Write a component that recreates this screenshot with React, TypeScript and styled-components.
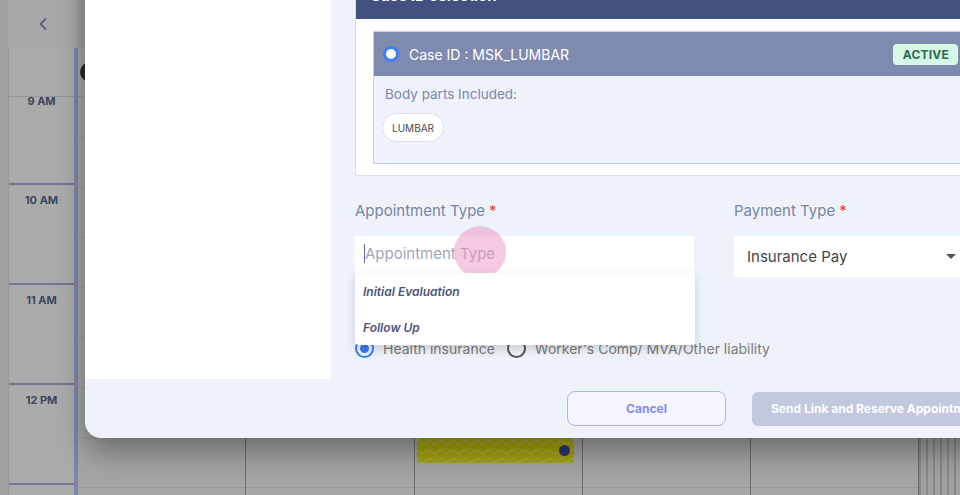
import React from 'react'
import styled, { createGlobalStyle } from 'styled-components'
import { ChevronLeft } from 'lucide-react'

const GlobalStyle = createGlobalStyle`
    html, body {
        margin: 0;
        padding: 0;
        width: 960px;
        height: 495px;
        overflow: hidden;
    }
    body {
        font-family: Inter, 'Open Sans', sans-serif;
        background: #f0f0f0;
    }
    * {
        box-sizing: border-box;
    }
`

const Page = styled.div`
    position: relative;
    width: 960px;
    height: 495px;
    overflow: hidden;
`

/* calendar behind the modal */

const Calendar = styled.div`
    display: flex;
    flex-direction: column;
    padding-left: 8px;
    height: 100%;
`

const CalHeader = styled.div`
    display: flex;
    height: 48px;
    flex: 0 0 48px;
    background: #ececec;
`

const NavCell = styled.div`
    width: 69px;
    display: flex;
    align-items: center;
    justify-content: center;
    background: #fcfdff;
    color: #8090bb;
`

const CalBody = styled.div`
    display: flex;
    flex: 1;
`

const TimeColumn = styled.div`
    width: 70px;
    display: flex;
    flex-direction: column;
    background: #ffffff;
    border-left: 1px solid #e2e2e2;
    border-right: 4px solid #bdc7fa;
`

const AllDayCell = styled.div`
    height: 49px;
    flex: 0 0 49px;
    border-bottom: 1px solid #e2e2e2;
    position: relative;
`

const HourCell = styled.div<{ $height: number; $first?: boolean }>`
    flex: 0 0 ${(p) => p.$height}px;
    border-top: ${(p) => (p.$first ? 'none' : '2px solid #a6afdc')};
    display: flex;
    justify-content: center;
    overflow: hidden;
`

const HourLabel = styled.span<{ $shift?: number }>`
    font-size: 11px;
    font-weight: 700;
    color: #5e6890;
    margin-top: ${(p) => p.$shift ?? 8}px;
    line-height: 14px;
`

const DayColumn = styled.div<{ $width: number }>`
    position: relative;
    flex: 0 0 ${(p) => p.$width}px;
    display: flex;
    flex-direction: column;
    border-right: 1px solid #a2a2a2;
    background: #f7f7f7;
`

const Slots = styled.div`
    flex: 1;
    position: relative;
    background-image: linear-gradient(to bottom, #e4e4e4 1px, transparent 1px);
    background-size: 100% 50px;
    background-position: 0 40px;
`

const Striped = styled.div`
    flex: 1;
    background: repeating-linear-gradient(to right, #cdcdcd 0 2px, #f1f1f1 2px 7px);
`

const Avatar = styled.div`
    position: absolute;
    left: 2px;
    top: 14px;
    width: 20px;
    height: 20px;
    border-radius: 50%;
    background: #3f3a48;
`

const Event = styled.div`
    position: absolute;
    left: 2px;
    right: 8px;
    top: 341px;
    height: 25px;
    border-radius: 4px;
    overflow: hidden;
    background: #f8f500;
`

const EventDot = styled.span`
    position: absolute;
    right: 4px;
    top: 7px;
    width: 11px;
    height: 11px;
    border-radius: 50%;
    background: #4350a8;
`

const Overlay = styled.div`
    position: absolute;
    inset: 0;
    background: rgba(0, 0, 0, 0.33);
`

/* modal */

const Modal = styled.div`
    position: absolute;
    left: 85px;
    top: -49px;
    width: 927px;
    height: 487px;
    display: flex;
    flex-direction: column;
    background: #eef3fb;
    border-radius: 16px;
    box-shadow: 0 14px 30px rgba(0, 0, 0, 0.35);
    overflow: hidden;
`

const ModalBody = styled.div`
    flex: 1;
    display: flex;
    min-height: 0;
`

const Sidebar = styled.div`
    width: 246px;
    background: #ffffff;
`

const Content = styled.div`
    flex: 1;
    padding: 24px 24px 0;
    display: flex;
    flex-direction: column;
`

const CaseCard = styled.div`
    border: 1px solid #dcdfe7;
    border-top: none;
    background: #ffffff;
`

const CaseHeader = styled.div`
    height: 44px;
    display: flex;
    align-items: center;
    padding: 0 14px 3px;
    background: #42517f;
    color: #ffffff;
    font-weight: 700;
    font-size: 15px;
`

const CaseCardBody = styled.div`
    padding: 12px 17px 11px;
`

const CaseBox = styled.div`
    border: 1px solid #c8cdf3;
    background: #eef3fb;
`

const CaseRow = styled.div`
    height: 44px;
    display: flex;
    align-items: center;
    padding: 0 11px 0 9px;
    background: #7f8bae;
    color: #ffffff;
    font-size: 14px;
`

const CaseRadio = styled.span`
    width: 16px;
    height: 16px;
    border-radius: 50%;
    border: 3px solid #3c7ef6;
    background: #ffffff;
    margin-right: 10px;
`

const ActiveBadge = styled.span`
    margin-left: auto;
    height: 21px;
    padding: 0 9px 0 10px;
    display: flex;
    align-items: center;
    border-radius: 4px;
    background: #d6f7e6;
    color: #2d6a4e;
    font-size: 12px;
    font-weight: 700;
    letter-spacing: 0.2px;
`

const CaseBoxBody = styled.div`
    padding: 8px 8px 21px;
`

const PartsLabel = styled.div`
    font-size: 13.5px;
    line-height: 20px;
    color: #7d86a6;
    padding-left: 3px;
`

const Chip = styled.span`
    display: inline-flex;
    align-items: center;
    margin-top: 9px;
    height: 29px;
    padding: 0 9px;
    border-radius: 15px;
    background: #ffffff;
    border: 1px solid #dddfe5;
    font-size: 10px;
    color: #4a4a4a;
`

const FormGrid = styled.div`
    display: grid;
    grid-template-columns: 339px 231px;
    column-gap: 40px;
    margin-top: 25px;
`

const Field = styled.div`
    display: flex;
    flex-direction: column;
    gap: 15px;
`

const Label = styled.div<{ $top?: number }>`
    font-size: 15px;
    line-height: 20px;
    color: #7a83a3;
    margin-top: ${(p) => p.$top ?? 0}px;
`

const Required = styled.span`
    color: #e53935;
    margin-left: 4px;
`

const InputBox = styled.div`
    position: relative;
    height: 41px;
    background: #ffffff;
    display: flex;
    align-items: flex-start;
    padding: 8px 9px 0;
    font-size: 15px;
    color: #a2a7b8;
`

const Caret = styled.span`
    width: 1px;
    height: 19px;
    background: #5068b5;
`

const Ripple = styled.span`
    position: absolute;
    left: 99px;
    top: -10px;
    width: 52px;
    height: 52px;
    border-radius: 50%;
    background: rgba(236, 150, 195, 0.5);
    z-index: 2;
`

const Menu = styled.ul`
    position: absolute;
    left: 0;
    top: 37px;
    width: 340px;
    margin: 0;
    padding: 0;
    list-style: none;
    background: #ffffff;
    border-radius: 0 0 4px 4px;
    box-shadow: 0 4px 10px rgba(0, 0, 0, 0.16);
    z-index: 3;
`

const MenuItem = styled.li`
    height: 36px;
    display: flex;
    align-items: center;
    padding-left: 8px;
    font-size: 12px;
    font-style: italic;
    font-weight: 600;
    color: #4b5479;
`

const SelectBox = styled.div`
    height: 41px;
    background: #ffffff;
    display: flex;
    align-items: center;
    justify-content: space-between;
    padding: 0 9px 0 13px;
    font-size: 15px;
    color: #454545;
`

const SelectArrow = styled.span`
    width: 0;
    height: 0;
    border-left: 5px solid transparent;
    border-right: 5px solid transparent;
    border-top: 5px solid #555555;
`

const RadioRow = styled.div`
    display: flex;
    align-items: center;
    margin-top: 16px;
    height: 18px;
`

const RadioOption = styled.label`
    display: flex;
    align-items: center;
    gap: 9px;
    margin-right: 12px;
    font-size: 14px;
    color: #7a7a7a;
`

const RadioCircle = styled.span<{ $checked?: boolean }>`
    width: 19px;
    height: 19px;
    border-radius: 50%;
    border: 2px solid ${(p) => (p.$checked ? '#3d7cf2' : '#555555')};
    display: flex;
    align-items: center;
    justify-content: center;

    &::after {
        content: '';
        width: 9px;
        height: 9px;
        border-radius: 50%;
        background: ${(p) => (p.$checked ? '#3d7cf2' : 'transparent')};
    }
`

const Footer = styled.div`
    flex: 0 0 59px;
    display: flex;
    align-items: center;
    justify-content: flex-end;
    gap: 26px;
    padding-right: 24px;
`

const CancelButton = styled.button`
    width: 159px;
    height: 35px;
    border: 1.5px solid #a9b4f8;
    border-radius: 8px;
    background: #f7f5ff;
    color: #7b8af5;
    font-family: inherit;
    font-size: 12px;
    font-weight: 700;
`

const SendButton = styled.button`
    width: 236px;
    height: 34px;
    border: none;
    border-radius: 6px;
    background: #c1c8e0;
    color: #ffffff;
    font-family: inherit;
    font-size: 12px;
    font-weight: 700;
    text-align: left;
    padding: 0 0 0 19px;
    white-space: nowrap;
    overflow: hidden;
`

const hours = [
    { label: '9 AM', height: 86, shift: -3, first: true },
    { label: '10 AM', height: 100 },
    { label: '11 AM', height: 100 },
    { label: '12 PM', height: 100 },
    { label: '1 PM', height: 100 },
]

const dayWidths = [168, 169, 168, 168, 168]

const Zigzag = () => (
    <svg width="100%" height="100%">
        <defs>
            <pattern id="zz" width="12" height="9" patternUnits="userSpaceOnUse">
                <path d="M0 2 L6 7 L12 2" fill="none" stroke="#fdfb9c" strokeWidth="1.2" />
            </pattern>
        </defs>
        <rect width="100%" height="100%" fill="url(#zz)" />
    </svg>
)

const App = () => {
    return (
        <Page>
            <GlobalStyle />
            <Calendar>
                <CalHeader>
                    <NavCell>
                        <ChevronLeft size={20} strokeWidth={2.2} />
                    </NavCell>
                </CalHeader>
                <CalBody>
                    <TimeColumn>
                        <AllDayCell />
                        {hours.map((h) => (
                            <HourCell key={h.label} $height={h.height} $first={h.first}>
                                <HourLabel $shift={h.shift}>{h.label}</HourLabel>
                            </HourCell>
                        ))}
                    </TimeColumn>
                    {dayWidths.map((w, i) => (
                        <DayColumn key={i} $width={w}>
                            <AllDayCell>{i === 0 && <Avatar />}</AllDayCell>
                            <Slots>
                                {i === 2 && (
                                    <Event>
                                        <Zigzag />
                                        <EventDot />
                                    </Event>
                                )}
                            </Slots>
                        </DayColumn>
                    ))}
                    <Striped />
                </CalBody>
            </Calendar>
            <Overlay />
            <Modal>
                <ModalBody>
                    <Sidebar />
                    <Content>
                        <CaseCard>
                            <CaseHeader>Case ID selection</CaseHeader>
                            <CaseCardBody>
                                <CaseBox>
                                    <CaseRow>
                                        <CaseRadio />
                                        Case ID : MSK_LUMBAR
                                        <ActiveBadge>ACTIVE</ActiveBadge>
                                    </CaseRow>
                                    <CaseBoxBody>
                                        <PartsLabel>Body parts Included:</PartsLabel>
                                        <Chip>LUMBAR</Chip>
                                    </CaseBoxBody>
                                </CaseBox>
                            </CaseCardBody>
                        </CaseCard>
                        <FormGrid>
                            <Field>
                                <Label>
                                    Appointment Type<Required>*</Required>
                                </Label>
                                <InputBox>
                                    <Caret />
                                    Appointment Type
                                    <Ripple />
                                    <Menu>
                                        <MenuItem>Initial Evaluation</MenuItem>
                                        <MenuItem>Follow Up</MenuItem>
                                    </Menu>
                                </InputBox>
                            </Field>
                            <Field>
                                <Label>
                                    Payment Type<Required>*</Required>
                                </Label>
                                <SelectBox>
                                    Insurance Pay
                                    <SelectArrow />
                                </SelectBox>
                            </Field>
                        </FormGrid>
                        <Label $top={26}>
                            Insurance Type<Required>*</Required>
                        </Label>
                        <RadioRow>
                            <RadioOption>
                                <RadioCircle $checked />
                                Health insurance
                            </RadioOption>
                            <RadioOption>
                                <RadioCircle />
                                Worker's Comp/ MVA/Other liability
                            </RadioOption>
                        </RadioRow>
                    </Content>
                </ModalBody>
                <Footer>
                    <CancelButton>Cancel</CancelButton>
                    <SendButton>Send Link and Reserve Appointment</SendButton>
                </Footer>
            </Modal>
        </Page>
    )
}

export default App
